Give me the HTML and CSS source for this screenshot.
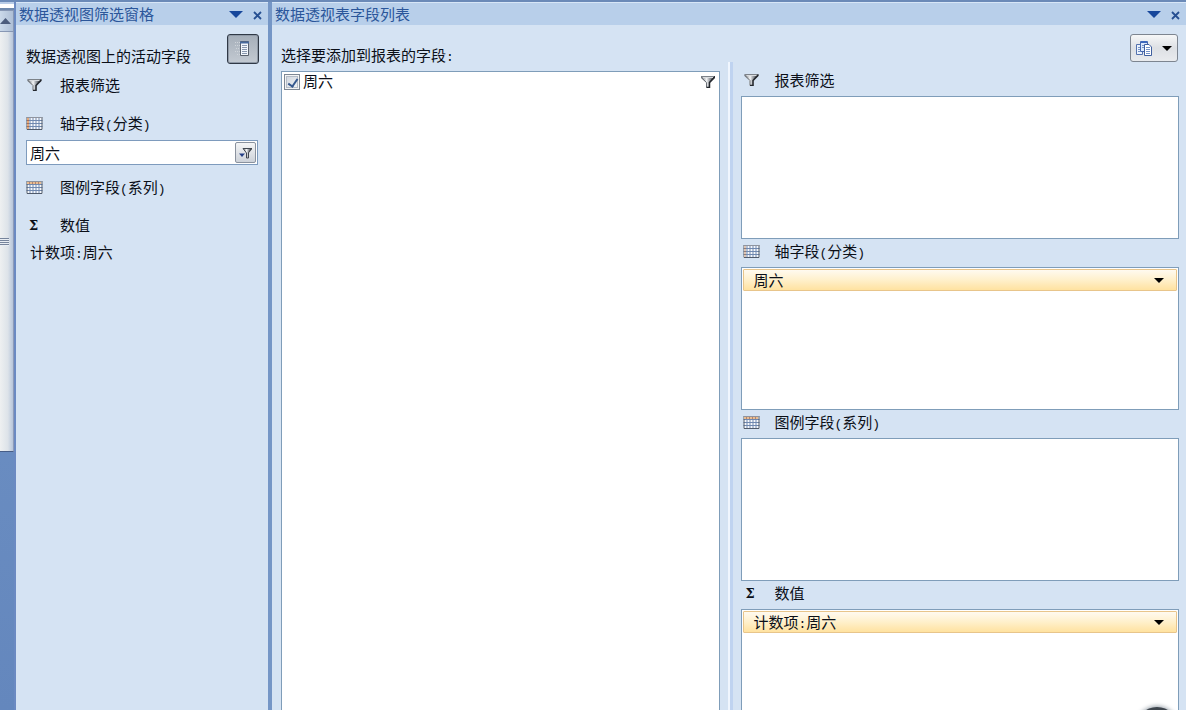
FILE: index.html
```html
<!DOCTYPE html>
<html lang="zh-CN">
<head>
<meta charset="utf-8">
<title>数据透视表字段列表</title>
<link rel="stylesheet" href="styles.css">
</head>
<body>
<svg class="defs" aria-hidden="true">
  <defs>
    <linearGradient id="metal" x1="0" x2="1" y1="0" y2="0">
      <stop offset="0" stop-color="#6d7278"/><stop offset=".4" stop-color="#f4f5f6"/><stop offset=".6" stop-color="#a0a4aa"/><stop offset="1" stop-color="#24282e"/>
    </linearGradient>
    <symbol id="funnel" viewBox="0 0 14 12">
      <path d="M0 0H14V2L9 7V12H5V7L0 2Z" fill="url(#metal)"/>
      <path d="M.5 1.500L5.500 6.500V11.500" fill="none" stroke="#6b7077"/>
      <path d="M13.500 1L8.500 6.500V11.500H5.500" fill="none" stroke="#24282e" stroke-width="1.500"/>
      <path d="M2 1.500H12" stroke="#d9dcdf"/>
      <path d="M1 .5H13" stroke="#7c8289"/>
    </symbol>
    <symbol id="grid" viewBox="0 0 16 13">
      <path d="M0 0H16V13H0Z" fill="#f6f8fb"/>
      <path d="M3.500 0V13M6.500 0V13M9.500 0V13M12.500 0V13M0 3.500H16M0 6.500H16M0 9.500H16" stroke="#7089b0"/>
      <path d="M.5 0V12.500H15.500V0" fill="none" stroke="#4f5a6b"/>
      <path d="M0 .5H16" stroke="#8f949f"/>
    </symbol>
  </defs>
</svg>
<div class="app">
  <div class="rail" aria-hidden="true">
    <div class="rail-split"></div>
    <div class="rail-up"><svg width="11" height="6" viewBox="0 0 11 6"><path d="M5.500 0L11 6H0Z" fill="#4c5c7c"/></svg></div>
    <div class="rail-track"><span class="grip"></span></div>
  </div>

  <aside class="pane filter-pane">
    <header class="titlebar">
      <h1 class="title">数据透视图筛选窗格</h1>
      <button class="plain" aria-label="窗格选项"><svg width="14" height="7" viewBox="0 0 14 7"><path d="M0 0H14L7 7Z" fill="#17479b"/></svg></button>
      <button class="plain" aria-label="关闭"><svg width="9" height="9" viewBox="0 0 9 9"><path d="M1 1L8 8M8 1L1 8" stroke="#264f92" stroke-width="1.800"/></svg></button>
    </header>
    <div class="filter-body">
      <div class="filter-head">
        <p class="caption">数据透视图上的活动字段</p>
        <button class="toggle" aria-label="字段列表" aria-pressed="true">
          <svg width="18" height="16" viewBox="0 0 18 16"><path d="M1 1.500H6M1 4.500H6M2 7.500H6M1 10.500H6M3 13.500H6" stroke="#cfd4da" stroke-dasharray="1 1"/><path d="M6.500 .5H14.500V14.500H6.500Z" fill="#f3f7fc" stroke="#59616c"/><path d="M6 1.500H15" stroke="#47699c" stroke-width="2"/><path d="M8 4.500H13M8 6.500H13M8 8.500H13M8 10.500H13M8 12.500H13" stroke="#8897ae"/></svg>
        </button>
      </div>
      <div class="area-label"><svg class="icon" width="14" height="12"><use href="#funnel"/></svg><span>报表筛选</span></div>
      <label class="area-label lower" for="axis"><svg class="icon" width="16" height="13"><use href="#grid"/><path d="M1 1H3V12H1Z" fill="#e2a97c"/><path d="M1 3.500H3M1 6.500H3M1 9.500H3" stroke="#a56e58"/></svg><span>轴字段<span class="half">(</span>分类<span class="half">)</span></span></label>
      <div class="combo">
        <input class="combo-text" id="axis" type="text" value="周六" readonly>
        <button class="combo-button" aria-label="筛选 周六"><svg width="13" height="12" viewBox="0 0 13 12"><path d="M0 6.500H6L3 10Z" fill="#243f86"/><path d="M4 1H13V2L10 6V11H7V6Z" fill="url(#metal)"/><path d="M4 1.500H12.500L9.500 5.500V11H7.500V6Z" fill="none" stroke="#40464f"/></svg></button>
      </div>
      <div class="area-label after-combo"><svg class="icon" width="16" height="13"><use href="#grid"/><path d="M1 1H15V3H1Z" fill="#e8bd90"/><path d="M3.500 1V3M6.500 1V3M9.500 1V3M12.500 1V3" stroke="#b58370"/></svg><span>图例字段<span class="half">(</span>系列<span class="half">)</span></span></div>
      <div class="area-label lower"><span class="icon sigma">Σ</span><span>数值</span></div>
      <p class="value-name">计数项<span class="half">:</span>周六</p>
    </div>
  </aside>

  <main class="pane list-pane">
    <header class="titlebar">
      <h1 class="title">数据透视表字段列表</h1>
      <button class="plain" aria-label="窗格选项"><svg width="14" height="7" viewBox="0 0 14 7"><path d="M0 0H14L7 7Z" fill="#17479b"/></svg></button>
      <button class="plain" aria-label="关闭"><svg width="9" height="9" viewBox="0 0 9 9"><path d="M1 1L8 8M8 1L1 8" stroke="#264f92" stroke-width="1.800"/></svg></button>
    </header>
    <div class="list-body">
      <section class="column">
        <p class="prompt">选择要添加到报表的字段<span class="half">:</span></p>
        <div class="fields">
          <div class="field">
            <input class="check" type="checkbox" id="saturday" checked>
            <label class="field-name" for="saturday">周六</label>
            <svg width="14" height="12"><use href="#funnel"/></svg>
          </div>
        </div>
      </section>
      <div class="divider"></div>
      <section class="column">
        <div class="tools">
          <button class="layout-button" aria-label="布局">
            <svg width="16" height="16" viewBox="0 0 16 16"><path d="M.5 4.500H6.500V14.500H.5Z" fill="#eaf2fd" stroke="#5572ae"/><path d="M4.500 1.500H11.500V11.500H4.500Z" fill="#dbe8fb" stroke="#4567ae"/><path d="M5 2H11" stroke="#3d68bd" stroke-width="2"/><path d="M8.500 4.500H13L15.500 7V15.500H8.500Z" fill="#fff" stroke="#3f5f9f"/><path d="M2 7.500H4M2 9.500H4M2 11.500H4M6 5.500H8M6 7.500H8M10 7.500H14M10 9.500H14M10 11.500H14M10 13.500H14" stroke="#7593c8"/></svg>
            <svg width="10" height="5" viewBox="0 0 10 5"><path d="M0 0H10L5 5Z" fill="#000"/></svg>
          </button>
        </div>
        <div class="zone-label"><svg class="icon" width="14" height="12"><use href="#funnel"/></svg><span>报表筛选</span></div>
        <div class="zone"></div>
        <div class="zone-label"><svg class="icon" width="16" height="13"><use href="#grid"/><path d="M1 1H3V12H1Z" fill="#ddc5b4"/><path d="M1 3.500H3M1 6.500H3M1 9.500H3" stroke="#907c78"/></svg><span>轴字段<span class="half">(</span>分类<span class="half">)</span></span></div>
        <div class="zone"><button class="pill"><span>周六</span><svg width="10" height="5" viewBox="0 0 10 5"><path d="M0 0H10L5 5Z" fill="#000"/></svg></button></div>
        <div class="zone-label"><svg class="icon" width="16" height="13"><use href="#grid"/><path d="M1 1H15V3H1Z" fill="#e8bd90"/><path d="M3.500 1V3M6.500 1V3M9.500 1V3M12.500 1V3" stroke="#b58370"/></svg><span>图例字段<span class="half">(</span>系列<span class="half">)</span></span></div>
        <div class="zone"></div>
        <div class="zone-label"><span class="icon sigma">Σ</span><span>数值</span></div>
        <div class="zone"><button class="pill"><span>计数项<span class="half">:</span>周六</span><svg width="10" height="5" viewBox="0 0 10 5"><path d="M0 0H10L5 5Z" fill="#000"/></svg></button></div>
      </section>
    </div>
    <div class="orb"></div>
  </main>
</div>
</body>
</html>
```
FILE: styles.css
```css
* { box-sizing: border-box; }
body {
  margin: 0;
  font: 15px/20px "Noto Sans CJK SC", sans-serif;
  color: #0b0f18;
}
h1, p { margin: 0; font: inherit; }
svg { display: block; flex: none; }
button, input { font: inherit; color: inherit; margin: 0; }
.defs { position: absolute; width: 0; height: 0; }
.half { font: 13px/1 "Liberation Mono", monospace; }

.app {
  display: flex;
  height: 100vh;
  overflow: hidden;
  background: #7596c6;
  border-top: 2px solid #6b8ab8;
}

.rail {
  width: 16px;
  flex: none;
  border-right: 2px solid #6b8ac2;
  background: linear-gradient(#7295c7, #6487bd);
}
.rail-split { height: 8px; background: #fff; border-top: 2px solid #b9cde8; border-bottom: 2px solid #6e89ae; }
.rail-up {
  display: flex;
  align-items: center;
  height: 22px;
  border: 1px solid #8797b4;
  border-left: 0;
  background: linear-gradient(90deg, #cbd9ea, #aebfd6);
}
.rail-track {
  display: flex;
  align-items: center;
  height: 420px;
  border-right: 1px solid #8e9bb8;
  border-bottom: 1px solid #465d87;
  background: linear-gradient(90deg, #eef0f1, #dde3e9 60%, #b7c5da);
}
.grip { width: 9px; height: 8px; background: repeating-linear-gradient(#76849c 0 1px, #e8edf3 1px 2px); }

.pane { display: flex; flex-direction: column; border-top: 1px solid #d7e6f7; background: #d5e3f3; }
.filter-pane { width: 252px; flex: none; margin-right: 4px; }
.list-pane { position: relative; flex: 1; min-width: 0; overflow: hidden; }
.titlebar {
  display: flex;
  align-items: center;
  gap: 10px;
  height: 22px;
  flex: none;
  padding: 0 6px 0 3px;
  background: #b8cfea;
}
.title { flex: 1; color: #2b569a; }
.plain { display: block; padding: 0; border: 0; background: none; }
.plain:last-child { margin-top: 2px; }

.filter-body { padding: 9px 9px 0 10px; }
.filter-head { display: flex; justify-content: space-between; height: 41px; }
.caption { padding-top: 12px; }
.toggle {
  display: grid;
  place-items: center;
  width: 32px;
  height: 30px;
  padding: 0;
  border: 1px solid #303946;
  border-radius: 3px;
  background: linear-gradient(#a5aeb9, #c3cad2);
  box-shadow: inset 0 0 0 1px #8f99a6;
}
.area-label, .zone-label { display: flex; align-items: center; }
.area-label { height: 20px; }
.area-label > span:last-child { padding-left: 17px; }
.zone-label > span:last-child { padding-left: 15px; }
.icon { width: 17px; }
.area-label.lower { margin-top: 18px; }
.area-label.after-combo { margin-top: 12px; }
.sigma { font: bold 13px/20px "DejaVu Serif", serif; padding: 1px 0 0 3px; }
.combo {
  display: flex;
  align-items: center;
  height: 25px;
  margin: 7px 1px 0 0;
  border: 1px solid #7e9bbd;
  background: #fff;
}
.combo-text { flex: 1; min-width: 0; padding: 0 3px; border: 0; background: none; outline: 0; }
.combo-button {
  display: grid;
  place-items: center;
  width: 21px;
  height: 21px;
  margin-right: 1px;
  padding: 0;
  border: 1px solid #8a929e;
  border-radius: 2px;
  background: linear-gradient(#f4f5f6, #cdd2d9);
}
.value-name { padding: 7px 0 0 4px; }

.list-body { display: flex; flex: 1; min-height: 0; gap: 8px; padding: 0 7px 0 9px; }
.column { flex: 1; min-width: 0; display: flex; flex-direction: column; }
.prompt { height: 46px; padding-top: 20px; flex: none; }
.fields { flex: 1; border: 1px solid #7f9db9; border-bottom: 0; background: #fff; }
.field { display: flex; align-items: center; gap: 3px; height: 20px; padding: 0 4px 0 2px; }
.field-name { flex: 1; line-height: 18px; padding-bottom: 2px; }
.check {
  appearance: none;
  position: relative;
  width: 16px;
  height: 16px;
  border: 1px solid #7d8794;
  background: linear-gradient(135deg, #cdd3dc, #f4f6f8);
  box-shadow: inset 0 0 0 1px #f4f4f4, inset 0 0 0 2px #b4bcc7;
}
.check:checked::after {
  content: "";
  position: absolute;
  left: 5px;
  top: 2px;
  width: 4px;
  height: 8px;
  border: solid #35588e;
  border-width: 0 2px 2px 0;
  transform: rotate(35deg);
}
.divider { width: 5px; margin-top: 37px; background: linear-gradient(90deg, #f0f6fe 0 2px, #bfd3f0 2px); }
.tools { display: flex; justify-content: flex-end; height: 43px; padding: 9px 1px 0 0; flex: none; }
.layout-button {
  display: flex;
  align-items: center;
  gap: 10px;
  height: 28px;
  width: 48px;
  padding: 0 5px;
  border: 1px solid #7d8590;
  border-radius: 3px;
  background: linear-gradient(#f6f7f8, #dde0e4 50%, #e9ebee);
}
.zone-label { height: 28px; flex: none; padding: 0 0 4px 2px; }
.zone { min-height: 143px; flex: none; padding: 1px; border: 1px solid #7f9db9; background: #fff; }
.pill {
  display: flex;
  align-items: center;
  justify-content: space-between;
  width: 100%;
  height: 22px;
  padding: 0 12px 0 10px;
  border: 1px solid #e8c58b;
  border-radius: 1px;
  background: linear-gradient(#fffaf0, #fff0cb 50%, #ffe2a0);
}
.orb {
  position: absolute;
  right: 8px;
  top: 100%;
  width: 42px;
  height: 42px;
  margin-top: -3px;
  border-radius: 50%;
  background: #3f464e;
  box-shadow: 0 0 4px 1px #9aa3ac;
}
```
